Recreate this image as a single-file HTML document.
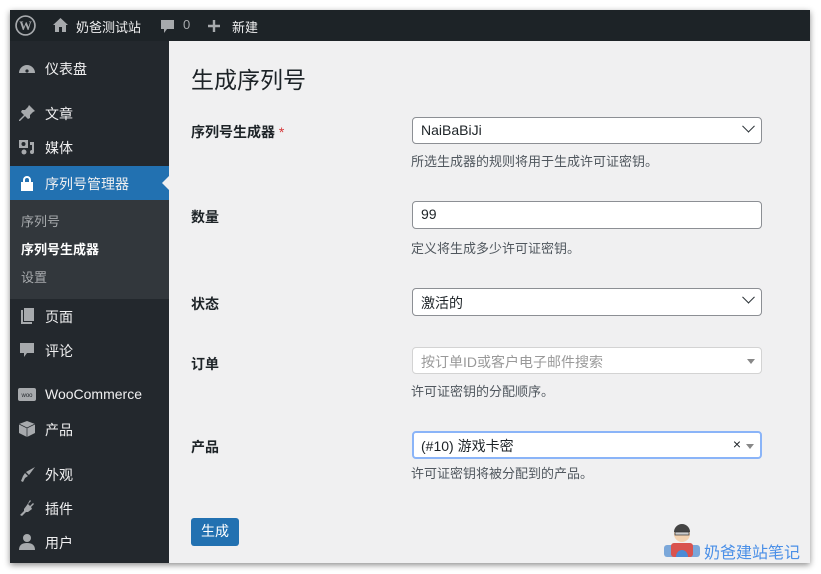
<!DOCTYPE html>
<html><head><meta charset="utf-8"><style>
*{margin:0;padding:0;box-sizing:border-box}
body{width:821px;height:574px;background:#fff;font-family:"Liberation Sans","Noto Sans CJK SC",sans-serif;position:relative;overflow:hidden;font-size:13px;color:#1d2327}
.win{position:absolute;left:10px;top:10px;width:800px;height:553px;background:#f0f0f1;box-shadow:0 2px 6px rgba(0,0,0,.45);overflow:hidden}
.bar{position:absolute;left:0;top:0;width:800px;height:31px;background:#1d2327;color:#f0f0f1;font-size:13px}
.bar span{position:absolute;top:7px}
.side{position:absolute;left:0;top:31px;width:159px;height:522px;background:#23282d}
.mi{position:absolute;left:0;width:159px;height:34px;color:#f0f0f1;font-size:14px}
.mi .t{position:absolute;left:35px;top:8px}
.mi .i{position:absolute;left:8px;top:8px;width:18px;height:18px}
.abs{position:absolute}
.lbl{position:absolute;left:181px;font-weight:bold;font-size:14px}
.in{position:absolute;left:402px;width:350px;height:28px;background:#fff;border:1px solid #8c8f94;border-radius:4px;font-size:14px;padding:5px 8px}
.desc{position:absolute;left:401px;font-size:13px;color:#50575e}
.chev{position:absolute;right:8px;top:8px;width:9px;height:9px;border-right:1.6px solid #2c3338;border-bottom:1.6px solid #2c3338;transform:rotate(45deg) translate(-3px,-3px)}
.tri{position:absolute;right:6px;top:11px;border-left:4px solid transparent;border-right:4px solid transparent;border-top:5px solid #888}
</style></head><body>
<div class="win">
<div class="bar">
<svg class="abs" style="left:5px;top:5px" width="21" height="21" viewBox="0 0 20 20"><circle cx="10" cy="10" r="9" fill="none" stroke="#a7aaad" stroke-width="1.6"/><text x="10" y="14.5" text-anchor="middle" font-size="12" font-weight="bold" font-family="Liberation Serif" fill="#a7aaad">W</text></svg>
<svg class="abs" style="left:42px;top:7px" width="17" height="16" viewBox="0 0 17 16"><path d="M8.5 1L1 8h2v7h4v-5h3v5h4V8h2z" fill="#a7aaad"/></svg>
<span style="left:66px">奶爸测试站</span>
<svg class="abs" style="left:150px;top:9px" width="15" height="15" viewBox="0 0 15 15"><path d="M1 1h13v9H7l-3 4v-4H1z" fill="#a7aaad"/></svg>
<span style="left:173px;color:#a7aaad">0</span>
<svg class="abs" style="left:197px;top:9px" width="14" height="14" viewBox="0 0 14 14"><path d="M7 1v12M1 7h12" stroke="#a7aaad" stroke-width="2.4"/></svg>
<span style="left:222px">新建</span>
</div>
<div class="side">
<div class="mi" style="top:10px"><svg class="i" viewBox="0 0 18 18"><path d="M1 14a8 8 0 0 1 16 0z" fill="#a7aaad"/><circle cx="9" cy="12" r="1.6" fill="#23282d"/></svg><span class="t">仪表盘</span></div>
<div class="mi" style="top:55px"><svg class="i" viewBox="0 0 18 18"><path d="M11 1l6 6-2 1-3 3 0 3-2 1-3-3-5 5-1 0 0-1 5-5-3-3 1-2 3 0 3-3z" fill="#a7aaad"/></svg><span class="t">文章</span></div>
<div class="mi" style="top:89px"><svg class="i" viewBox="0 0 18 18"><rect x="1" y="2" width="9" height="8" fill="#a7aaad"/><circle cx="5.5" cy="6" r="2" fill="#23282d"/><path d="M12 4h4v10a2 2 0 1 1-2-2V7h-2z" fill="#a7aaad"/><circle cx="6" cy="14" r="2.5" fill="#a7aaad"/></svg><span class="t">媒体</span></div>
<div class="mi" style="top:125px;background:#2271b1;height:34px"><svg class="i" viewBox="0 0 18 18"><path d="M5 8V6a4 4 0 0 1 8 0v2h-2V6a2 2 0 0 0-4 0v2z" fill="#fff"/><rect x="3" y="8" width="12" height="9" fill="#fff"/></svg><span class="t">序列号管理器</span><div class="abs" style="right:0;top:10px;border-top:7px solid transparent;border-bottom:7px solid transparent;border-right:7px solid #f0f0f1"></div></div>
<div class="abs" style="left:0;top:159px;width:159px;height:99px;background:#32373c;font-size:13px">
<div class="abs" style="left:11px;top:11px;color:#a7aaad">序列号</div>
<div class="abs" style="left:11px;top:39px;color:#fff;font-weight:bold">序列号生成器</div>
<div class="abs" style="left:11px;top:67px;color:#a7aaad">设置</div>
</div>
<div class="mi" style="top:258px"><svg class="i" viewBox="0 0 18 18"><path d="M3 3h2v12h9v2H3z" fill="#a7aaad"/><rect x="6" y="1" width="10" height="13" fill="#a7aaad"/></svg><span class="t">页面</span></div>
<div class="mi" style="top:292px"><svg class="i" viewBox="0 0 18 18"><path d="M2 2h14v10H9l-3 4v-4H2z" fill="#a7aaad"/></svg><span class="t">评论</span></div>
<div class="mi" style="top:337px"><svg class="i" viewBox="0 0 18 18"><rect x="0" y="2" width="18" height="13" rx="2" fill="#a7aaad"/><text x="9" y="11" text-anchor="middle" font-size="6" fill="#23282d" font-family="Liberation Sans">woo</text></svg><span class="t">WooCommerce</span></div>
<div class="mi" style="top:371px"><svg class="i" viewBox="0 0 18 18"><path d="M9 1l8 3v9l-8 4-8-4V4z" fill="#a7aaad"/><path d="M1 4l8 4 8-4M9 8v9" stroke="#23282d" fill="none" stroke-width=".7"/></svg><span class="t">产品</span></div>
<div class="mi" style="top:416px"><svg class="i" viewBox="0 0 18 18"><path d="M17 2L8 7l3 3zM7 8l3 3-3 2-2 4-2-1 2-5z" fill="#a7aaad"/></svg><span class="t">外观</span></div>
<div class="mi" style="top:450px"><svg class="i" viewBox="0 0 18 18"><path d="M12 1l1 1-3 3 2 2 3-3 1 1-3 3 1 2-4 3-2 0-4 4-2-1 4-4 0-2 3-4z" fill="#a7aaad"/></svg><span class="t">插件</span></div>
<div class="mi" style="top:484px"><svg class="i" viewBox="0 0 18 18"><circle cx="9" cy="5" r="4" fill="#a7aaad"/><path d="M1 17c0-5 3-7 8-7s8 2 8 7z" fill="#a7aaad"/></svg><span class="t">用户</span></div>
</div>
<div class="abs" style="left:181px;top:51px;font-size:23px;color:#1d2327">生成序列号</div>
<div class="lbl" style="top:112px">序列号生成器 <span style="color:#d63638;font-weight:normal">*</span></div>
<div class="in" style="top:107px;height:27px;padding-top:4px">NaiBaBiJi<div class="chev"></div></div>
<div class="desc" style="top:141px">所选生成器的规则将用于生成许可证密钥。</div>
<div class="lbl" style="top:197px">数量</div>
<div class="in" style="top:191px;padding-top:4px">99</div>
<div class="desc" style="top:228px">定义将生成多少许可证密钥。</div>
<div class="lbl" style="top:284px">状态</div>
<div class="in" style="top:278px;height:28px;padding-top:4px">激活的<div class="chev"></div></div>
<div class="lbl" style="top:344px">订单</div>
<div class="in" style="top:337px;height:27px;border-color:#d3d3d3;color:#999;padding-top:4px">按订单ID或客户电子邮件搜索<div class="tri"></div></div>
<div class="desc" style="top:371px">许可证密钥的分配顺序。</div>
<div class="lbl" style="top:427px">产品</div>
<div class="in" style="top:421px;height:28px;border-color:#8ab4f8;border-width:2px;padding:3px 7px">(#10) 游戏卡密<span class="abs" style="right:19px;top:3px;font-size:14px">×</span><div class="tri"></div></div>
<div class="desc" style="top:453px">许可证密钥将被分配到的产品。</div>
<div class="abs" style="left:181px;top:508px;width:48px;height:28px;background:#2271b1;border-radius:3px;color:#fff;font-size:14px;text-align:center;line-height:27px">生成</div>
<svg class="abs" style="left:652px;top:509px" width="40" height="39" viewBox="0 0 40 39"><rect x="2" y="26" width="36" height="12" rx="3" fill="#7ba7d9"/><rect x="9" y="24" width="22" height="14" rx="3" fill="#d9534f"/><path d="M14 38a6 7 0 0 1 12 0z" fill="#4a8bd6"/><circle cx="20" cy="15" r="8" fill="#f3d2b0"/><path d="M12 13a8 8 0 0 1 16 0z" fill="#444"/><rect x="13" y="13" width="14" height="3" fill="#ccc" stroke="#333" stroke-width=".7"/></svg>
<div class="abs" style="left:694px;top:529px;font-size:16px;color:#4a8fe7">奶爸建站笔记</div>
</div>
</body></html>
